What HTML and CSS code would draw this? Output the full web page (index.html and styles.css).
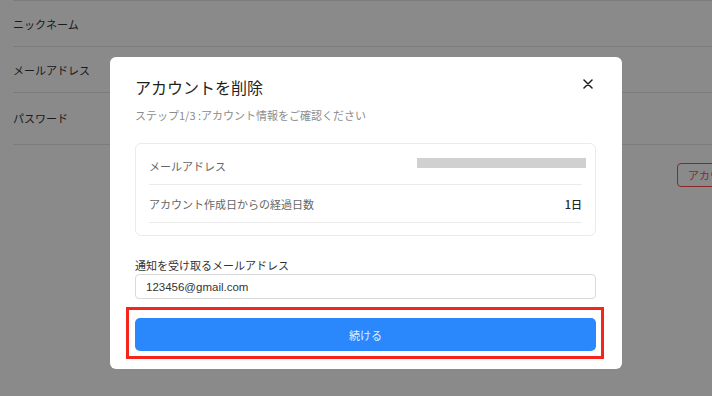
FILE: index.html
```html
<!DOCTYPE html>
<html lang="ja">
<head>
<meta charset="utf-8">
<link rel="stylesheet" href="styles.css">
</head>
<body>
<div class="page">
  <ul class="settings">
    <li class="setting"><span class="setting-label">ニックネーム</span></li>
    <li class="setting"><span class="setting-label">メールアドレス</span></li>
    <li class="setting setting-tall"><span class="setting-label">パスワード</span></li>
  </ul>
  <div class="danger-row">
    <button class="danger-btn">アカウントを削除</button>
  </div>
</div>

<div class="overlay">
  <div class="modal">
    <button class="modal-close" aria-label="閉じる">
      <svg viewBox="0 0 10 10" width="10" height="10"><path d="M1 1L9 9M9 1L1 9" stroke="#1f1f1f" stroke-width="1.5" stroke-linecap="round"/></svg>
    </button>
    <h2 class="modal-title">アカウントを削除</h2>
    <p class="modal-sub">ステップ1/3 :アカウント情報をご確認ください</p>

    <div class="info-card">
      <div class="info-row">
        <span class="info-label">メールアドレス</span>
        <span class="info-value redacted"></span>
      </div>
      <div class="info-row">
        <span class="info-label">アカウント作成日からの経過日数</span>
        <span class="info-value">1日</span>
      </div>
    </div>

    <label class="field-label">通知を受け取るメールアドレス</label>
    <div class="input">123456@gmail.com</div>

    <div class="action">
      <button class="primary-btn">続ける</button>
      <div class="highlight"></div>
    </div>
  </div>
</div>
</body>
</html>
```

FILE: styles.css
```css
* { box-sizing: border-box; }
html, body { margin: 0; padding: 0; }
body {
  width: 712px;
  height: 396px;
  overflow: hidden;
  background: #fff;
  font-family: "Noto Sans CJK JP", sans-serif;
  color: #262626;
}

.page { width: 712px; }
.settings {
  list-style: none;
  margin: 0 0 0 13px;
  padding: 0;
  border-top: 1px solid #e6e6e6;
}
.setting {
  height: 46px;
  display: flex;
  align-items: center;
  border-bottom: 1px solid #e6e6e6;
  font: 400 11px "Noto Sans CJK JP", sans-serif;
  color: #333;
}
.setting-tall { height: 52px; padding-bottom: 2px; }

.danger-row {
  padding: 16px 0 0 677px;
  white-space: nowrap;
}
.danger-btn {
  height: 24px;
  padding: 0 10px;
  border: 1px solid #ff4d4f;
  border-radius: 4px;
  background: #fff;
  color: #ff4d4f;
  font: 11px "Noto Sans CJK JP", sans-serif;
}

.overlay {
  position: fixed;
  inset: 0;
  background: rgba(0, 0, 0, 0.46);
}
.modal {
  position: relative;
  width: 512px;
  margin: 57px 0 0 110px;
  background: #fff;
  border-radius: 6px;
  padding: 18px 26px 18px 25px;
}
.modal-close {
  position: absolute;
  top: 19px;
  right: 26px;
  width: 16px;
  height: 16px;
  padding: 0;
  border: 0;
  background: none;
  display: flex;
  align-items: center;
  justify-content: center;
}
.modal-title {
  margin: 0;
  font: 400 16px/24px "Noto Sans CJK JP", sans-serif;
  color: #1f1f1f;
}
.modal-sub {
  margin: 7px 0 0;
  font: 11px/18px "Noto Sans CJK JP", sans-serif;
  color: #8c8c8c;
  white-space: pre;
}

.info-card {
  margin-top: 19px;
  border: 1px solid #ebebeb;
  border-radius: 6px;
  padding: 3px 13px 12px 13px;
}
.info-row {
  height: 38px;
  display: flex;
  align-items: center;
  justify-content: space-between;
  border-bottom: 1px solid #ebebeb;
  font: 11px "Noto Sans CJK JP", sans-serif;
}
.info-label { color: #666; }
.info-value { color: #262626; font-weight: 500; }
.redacted {
  width: 169px;
  height: 10px;
  margin-right: -4px;
  margin-top: -6px;
  background: #d0d0d0;
}

.field-label {
  display: block;
  margin-top: 20px;
  font: 11px/18px "Noto Sans CJK JP", sans-serif;
  color: #333;
}
.input {
  height: 25px;
  border: 1px solid #d9d9d9;
  border-radius: 4px;
  padding: 0 10px;
  display: flex;
  align-items: center;
  font: 11.5px "Liberation Sans", "Noto Sans CJK JP", sans-serif;
  color: #333;
}

.action {
  position: relative;
  margin-top: 19px;
}
.primary-btn {
  display: block;
  width: 100%;
  height: 33px;
  border: 0;
  border-radius: 5px;
  background: #2b88fc;
  color: rgba(255, 255, 255, 0.88);
  font: 11px "Noto Sans CJK JP", sans-serif;
}
.highlight {
  position: absolute;
  left: -9px;
  top: -11px;
  right: -8px;
  bottom: -8px;
  border: 3px solid #f5251c;
  pointer-events: none;
}
```
